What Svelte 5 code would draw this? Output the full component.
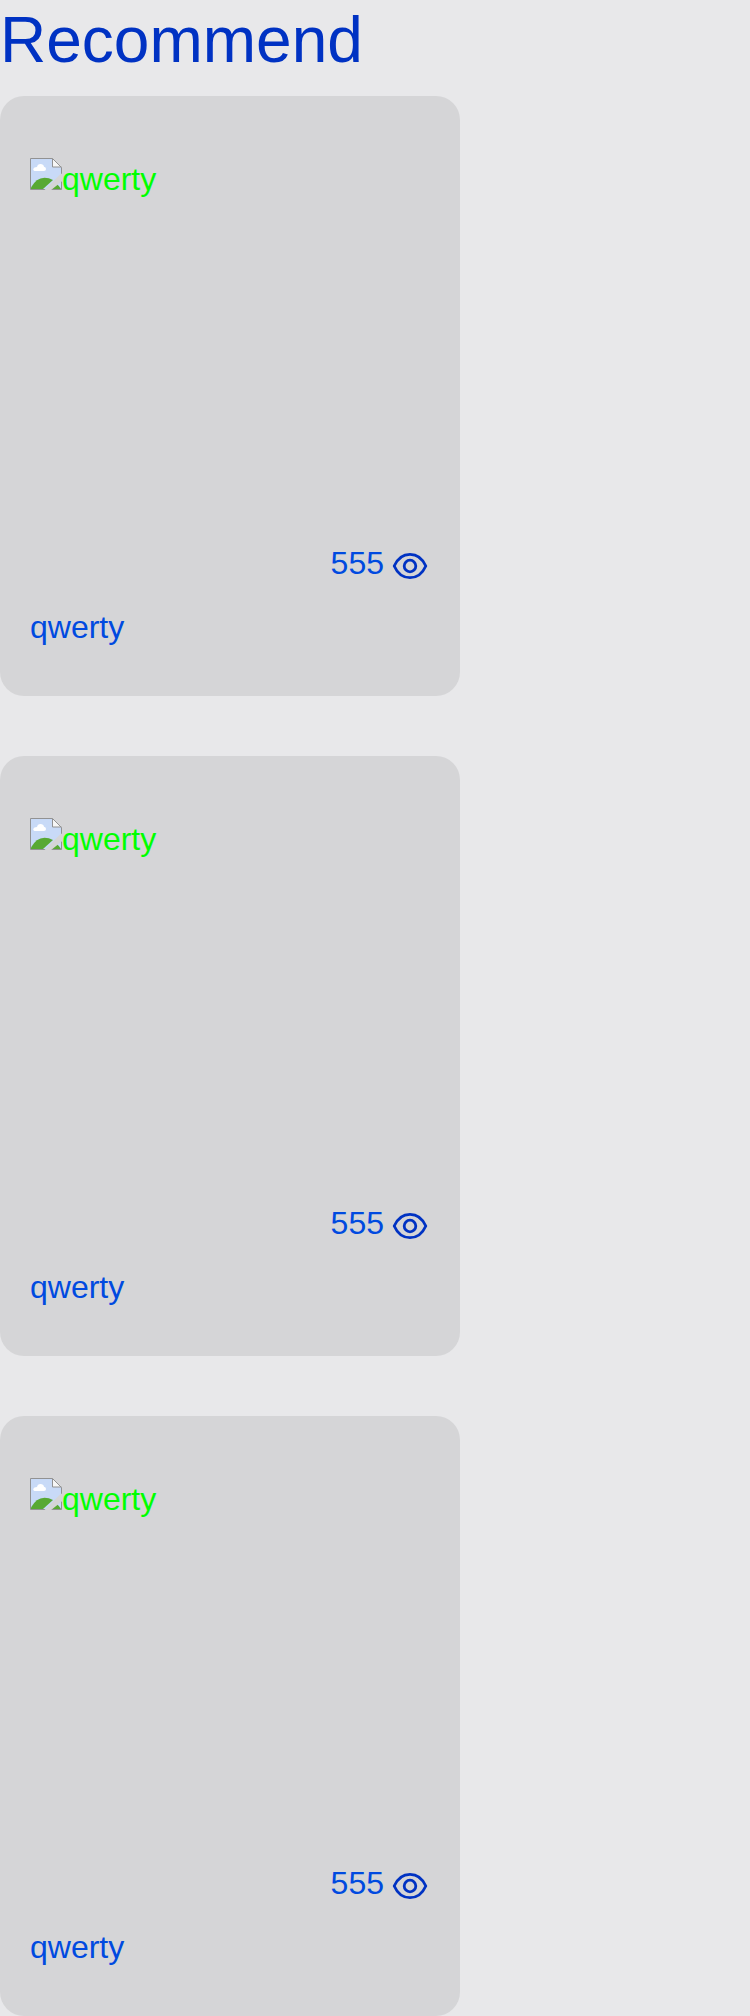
<script>
  const items = [
    { name: 'qwerty', views: 555 },
    { name: 'qwerty', views: 555 },
    { name: 'qwerty', views: 555 }
  ];
</script>

<main>
  <h1>Recommend</h1>
  <div class="list">
    {#each items as item}
      <article class="card">
        <div class="cover">
          <svg class="missing" viewBox="0 0 32 32" aria-hidden="true">
            <path d="M.5 .5H22.5L31.5 9.5V31.5H.5Z" fill="#c8daf7" />
            <path d="M4.500 13Q3 12.500 3.200 11Q3.800 9 7 9Q7.500 6 10.500 6Q13.500 6 14 8.800Q16 9 16 11Q16 13 14 13Z" fill="#fff" />
            <path d="M1 31V29.500Q6 20 14.500 19.700Q19 19.700 23 22L13 31Z" fill="#58a934" />
            <path d="M20 31L26 25.500Q29 27.500 31 31Z" fill="#58a934" />
            <path d="M22.500 .5V9H31.500Z" fill="#f6f6f6" />
            <path d="M22.500 .5V9H31.500M.5 .5H22.500L31.500 9.500V31.500H.5Z" fill="none" stroke="#929292" />
            <path d="M33 15L30 16.500L14 32.500H20.500L33 22.500Z" fill="#d5d5d7" />
          </svg><span>{item.name}</span>
        </div>
        <div class="views">
          <span>{item.views}</span>
          <svg class="eye" viewBox="0 0 36 28" aria-hidden="true">
            <path d="M2.200 14C5.500 6.500 11.500 2.300 18 2.300S30.500 6.500 33.800 14C30.500 21.500 24.500 25.700 18 25.700S5.500 21.500 2.200 14Z" />
            <circle cx="18" cy="14" r="5.800" />
          </svg>
        </div>
        <div class="name">{item.name}</div>
      </article>
    {/each}
  </div>
</main>

<style>
  :global(body) {
    background: #e8e8ea;
  }
  main {
    font-family: "Liberation Sans", Arial, sans-serif;
    font-size: 32px;
    line-height: 36px;
  }
  h1 {
    margin: 0;
    height: 96px;
    font-size: 64px;
    font-weight: 400;
    line-height: 80px;
    color: #0032c3;
  }
  .list {
    display: flex;
    flex-direction: column;
    gap: 60px;
  }
  .card {
    box-sizing: border-box;
    width: 460px;
    height: 600px;
    padding: 62px 30px 0;
    border-radius: 24px;
    background: #d5d5d7;
    color: #004ae0;
  }
  .cover {
    display: flex;
    align-items: flex-start;
    height: 387px;
    color: #00ff00;
  }
  .cover span {
    padding-top: 3px;
  }
  .missing {
    display: block;
    width: 32px;
    height: 32px;
  }
  .views {
    display: flex;
    justify-content: flex-end;
    gap: 8px;
    height: 64px;
    padding-right: 2px;
  }
  .eye {
    width: 36px;
    height: 28px;
    margin-top: 7px;
    fill: none;
    stroke: #0032c3;
    stroke-width: 2.8;
    stroke-linejoin: round;
  }
</style>
